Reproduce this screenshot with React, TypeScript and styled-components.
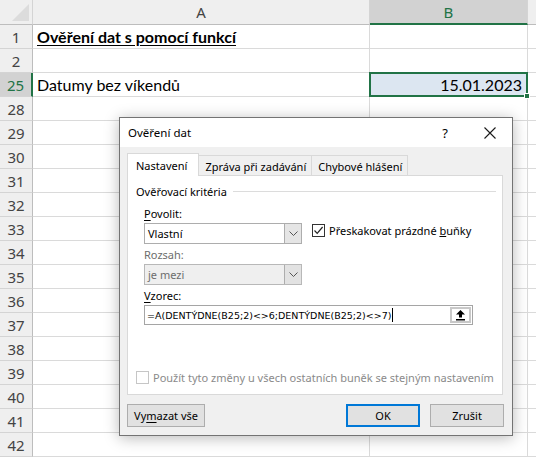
import React from 'react';
import styled, { createGlobalStyle } from 'styled-components';

const GlobalStyle = createGlobalStyle`
  html, body {
    margin: 0;
    padding: 0;
    background: #ffffff;
    overflow: hidden;
  }
  * { box-sizing: border-box; }
`;

const rows = [1, 2, 25, 28, 29, 30, 31, 32, 33, 34, 35, 36, 37, 38, 39, 40, 41, 42];

const App: React.FC = () => {
  return (
    <Page>
      <GlobalStyle />
      <Sheet>
        <Corner>
          <CornerTriangle />
        </Corner>
        <ColHeader>A</ColHeader>
        <ColHeader $active>B</ColHeader>
        <ColHeader />
        {rows.map((n) => (
          <React.Fragment key={n}>
            <RowHeader $active={n === 25}>{n}</RowHeader>
            <Cell>
              {n === 1 && <Heading>Ověření dat s pomocí funkcí</Heading>}
              {n === 25 && 'Datumy bez víkendů'}
            </Cell>
            {n === 25 ? (
              <SelectedCell>
                15.01.2023
                <FillHandle />
              </SelectedCell>
            ) : (
              <Cell />
            )}
            <Cell />
          </React.Fragment>
        ))}
      </Sheet>

      <Dialog>
        <TitleBar>
          <DialogTitle>Ověření dat</DialogTitle>
          <TitleButtons>
            <HelpMark>?</HelpMark>
            <CloseIcon width="12" height="12" viewBox="0 0 12 12">
              <path d="M0.5 0.5 L11.5 11.5 M11.5 0.5 L0.5 11.5" stroke="#1a1a1a" strokeWidth="1.1" />
            </CloseIcon>
          </TitleButtons>
        </TitleBar>

        <DialogBody>
          <Tabs>
            <Tab $selected>Nastavení</Tab>
            <Tab>Zpráva při zadávání</Tab>
            <Tab>Chybové hlášení</Tab>
          </Tabs>

          <Panel>
            <GroupLabel>
              <span>Ověřovací kritéria</span>
              <GroupLine />
            </GroupLabel>

            <Fields>
              <FieldRow>
                <Field>
                  <Label>
                    <u>P</u>ovolit:
                  </Label>
                  <Select>
                    <SelectValue>Vlastní</SelectValue>
                    <DropButton>
                      <Chevron />
                    </DropButton>
                  </Select>
                </Field>
                <CheckRow>
                  <CheckBox>
                    <svg width="11" height="11" viewBox="0 0 11 11">
                      <path d="M1.5 5.5 L4.2 8.3 L9.6 2" fill="none" stroke="#222" strokeWidth="1.2" />
                    </svg>
                  </CheckBox>
                  <span>
                    Přeskakovat prázdné <u>b</u>uňky
                  </span>
                </CheckRow>
              </FieldRow>

              <Field>
                <Label $disabled>Rozsah:</Label>
                <Select $disabled>
                  <SelectValue>je mezi</SelectValue>
                  <DropButton $disabled>
                    <Chevron />
                  </DropButton>
                </Select>
              </Field>

              <Field>
                <Label>
                  <u>V</u>zorec:
                </Label>
                <FormulaBox>
                  <FormulaText>
                    =A(DENTÝDNE(B25;2)&lt;&gt;6;DENTÝDNE(B25;2)&lt;&gt;7)
                    <Caret />
                  </FormulaText>
                  <CollapseButton>
                    <svg width="11" height="12" viewBox="0 0 11 12">
                      <path d="M5.5 1 L10 5.5 L7 5.5 L7 8.5 L4 8.5 L4 5.5 L1 5.5 Z" fill="#000" />
                      <rect x="1" y="10" width="9" height="1.5" fill="#000" />
                    </svg>
                  </CollapseButton>
                </FormulaBox>
              </Field>
            </Fields>

            <ApplyRow>
              <CheckBox $disabled />
              <span>Použít tyto změny u všech ostatních buněk se stejným nastavením</span>
            </ApplyRow>
          </Panel>

          <ButtonBar>
            <Button $width={78}>
              Vy<u>m</u>azat vše
            </Button>
            <ButtonGroup>
              <Button $primary>OK</Button>
              <Button>Zrušit</Button>
            </ButtonGroup>
          </ButtonBar>
        </DialogBody>
      </Dialog>
    </Page>
  );
};

const Chevron: React.FC = () => (
  <svg width="9" height="5" viewBox="0 0 9 5">
    <path d="M0.5 0.5 L4.5 4.5 L8.5 0.5" fill="none" stroke="#555" strokeWidth="1" />
  </svg>
);

const Page = styled.div`
  position: relative;
  width: 536px;
  height: 458px;
  overflow: hidden;
  font-family: 'Noto Sans', 'Open Sans', sans-serif;
`;

const Sheet = styled.div`
  display: grid;
  grid-template-columns: 33px 337px 158px 30px;
  grid-template-rows: 25px;
  grid-auto-rows: 24px;
`;

const Corner = styled.div`
  position: relative;
  background: #efefef;
  border-right: 1px solid #d4d4d4;
  border-bottom: 1px solid #bdbdbd;
`;

const CornerTriangle = styled.div`
  position: absolute;
  right: 3px;
  bottom: 3px;
  width: 0;
  height: 0;
  border-left: 17px solid transparent;
  border-bottom: 17px solid #dcdcdc;
`;

const ColHeader = styled.div<{ $active?: boolean }>`
  display: flex;
  align-items: center;
  justify-content: center;
  font-size: 15px;
  color: ${(p) => (p.$active ? '#217346' : '#444444')};
  background: ${(p) => (p.$active ? '#d2d2d2' : '#efefef')};
  border-right: 1px solid #d4d4d4;
  border-bottom: ${(p) => (p.$active ? '2px solid #217346' : '1px solid #bdbdbd')};
`;

const RowHeader = styled.div<{ $active?: boolean }>`
  display: flex;
  align-items: center;
  justify-content: center;
  font-size: 15px;
  color: ${(p) => (p.$active ? '#217346' : '#444444')};
  background: ${(p) => (p.$active ? '#d2d2d2' : '#efefef')};
  border-right: ${(p) => (p.$active ? '2px solid #217346' : '1px solid #bdbdbd')};
  border-bottom: 1px solid #d4d4d4;
`;

const Cell = styled.div`
  display: flex;
  align-items: center;
  padding: 0 4px;
  font-family: Lato, 'Noto Sans', sans-serif;
  font-size: 16px;
  color: #000;
  white-space: nowrap;
  border-right: 1px solid #dadada;
  border-bottom: 1px solid #dadada;
`;

const Heading = styled.span`
  font-weight: 700;
  text-decoration: underline;
  text-underline-offset: 2px;
`;

const SelectedCell = styled(Cell)`
  position: relative;
  justify-content: flex-end;
  padding-right: 4px;
  background: #dce6f1;
  border: 2px solid #217346;
  margin: -1px 0 0 -1px;
  width: calc(100% + 1px);
  height: calc(100% + 1px);
`;

const FillHandle = styled.div`
  position: absolute;
  right: -4px;
  bottom: -4px;
  width: 6px;
  height: 6px;
  background: #217346;
  border: 1px solid #fff;
`;

const Dialog = styled.div`
  position: absolute;
  left: 119px;
  top: 117px;
  width: 394px;
  height: 319px;
  display: flex;
  flex-direction: column;
  background: #f0f0f0;
  border: 1px solid #737373;
  box-shadow: 0 2px 14px rgba(0, 0, 0, 0.28);
  font-family: 'Noto Sans', 'Open Sans', sans-serif;
  font-size: 11px;
  color: #000;
`;

const TitleBar = styled.div`
  height: 30px;
  display: flex;
  align-items: center;
  justify-content: space-between;
  padding: 0 16px 0 8px;
  background: #ffffff;
`;

const DialogTitle = styled.span`
  font-size: 11.5px;
`;

const TitleButtons = styled.div`
  display: flex;
  align-items: center;
  gap: 36px;
`;

const HelpMark = styled.span`
  font-size: 13px;
`;

const CloseIcon = styled.svg`
  display: block;
`;

const DialogBody = styled.div`
  flex: 1;
  display: flex;
  flex-direction: column;
  padding: 6px 8px 8px 7px;
`;

const Tabs = styled.div`
  display: flex;
  align-items: flex-end;
  height: 23px;
  margin-bottom: -1px;
  position: relative;
  z-index: 1;
`;

const Tab = styled.div<{ $selected?: boolean }>`
  display: flex;
  align-items: center;
  height: ${(p) => (p.$selected ? '23px' : '20px')};
  padding: ${(p) => (p.$selected ? '1px 11px 0 8px' : '1px 5px 0 6px')};
  margin-bottom: ${(p) => (p.$selected ? '0' : '1px')};
  background: ${(p) => (p.$selected ? '#ffffff' : '#f0f0f0')};
  border: 1px solid #d9d9d9;
  border-bottom: 0;
  border-left: ${(p) => (p.$selected ? '1px solid #d9d9d9' : '0')};
  white-space: nowrap;
`;

const Panel = styled.div`
  height: 220px;
  margin-right: 1px;
  display: flex;
  flex-direction: column;
  background: #ffffff;
  border: 1px solid #d9d9d9;
  padding: 7px 6px 0 8px;
`;

const GroupLabel = styled.div`
  display: flex;
  align-items: center;
  gap: 6px;
  height: 16px;
`;

const GroupLine = styled.div`
  flex: 1;
  height: 1px;
  background: #dcdcdc;
`;

const Fields = styled.div`
  display: flex;
  flex-direction: column;
  padding: 4px 0 0 8px;
`;

const FieldRow = styled.div`
  display: flex;
  align-items: flex-end;
  gap: 10px;
`;

const Field = styled.div`
  display: flex;
  flex-direction: column;
`;

const Label = styled.div<{ $disabled?: boolean }>`
  height: 20px;
  display: flex;
  align-items: center;
  color: ${(p) => (p.$disabled ? '#6d6d6d' : '#000')};
  u {
    text-underline-offset: 2px;
  }
`;

const Select = styled.div<{ $disabled?: boolean }>`
  width: 158px;
  height: 21px;
  display: flex;
  align-items: stretch;
  background: ${(p) => (p.$disabled ? '#efefef' : '#ffffff')};
  border: 1px solid ${(p) => (p.$disabled ? '#b8b8b8' : '#adadad')};
  color: ${(p) => (p.$disabled ? '#6d6d6d' : '#000')};
`;

const SelectValue = styled.div`
  flex: 1;
  display: flex;
  align-items: center;
  padding-left: 3px;
`;

const DropButton = styled.div<{ $disabled?: boolean }>`
  width: 17px;
  display: flex;
  align-items: center;
  justify-content: center;
  background: ${(p) => (p.$disabled ? '#e2e2e2' : '#e5e5e5')};
  border-left: 1px solid #adadad;
`;

const CheckRow = styled.div`
  display: flex;
  align-items: center;
  gap: 4px;
  height: 22px;
  padding-bottom: 5px;
`;

const CheckBox = styled.div<{ $disabled?: boolean }>`
  flex-shrink: 0;
  width: 13px;
  height: 13px;
  display: flex;
  align-items: center;
  justify-content: center;
  background: #fff;
  border: 1px solid ${(p) => (p.$disabled ? '#c6c6c6' : '#333333')};
`;

const FormulaBox = styled.div`
  width: 329px;
  height: 20px;
  display: flex;
  align-items: stretch;
  background: #fff;
  border: 1px solid #a5a5a5;
`;

const FormulaText = styled.div`
  flex: 1;
  display: flex;
  align-items: center;
  padding-left: 2px;
  font-family: 'DejaVu Sans', 'Noto Sans', sans-serif;
  font-size: 9.5px;
  white-space: nowrap;
`;

const Caret = styled.span`
  display: inline-block;
  width: 1px;
  height: 14px;
  margin-left: 1px;
  background: #000;
`;

const CollapseButton = styled.div`
  width: 21px;
  margin: 1px;
  display: flex;
  align-items: center;
  justify-content: center;
  background: #fff;
  border: 2px solid #c8c8c8;
`;

const ApplyRow = styled.div`
  display: flex;
  align-items: center;
  gap: 4px;
  margin-top: auto;
  margin-bottom: 9px;
  color: #8a8a8a;
  white-space: nowrap;
`;

const ButtonBar = styled.div`
  display: flex;
  justify-content: space-between;
  align-items: center;
  margin-top: 9px;
`;

const ButtonGroup = styled.div`
  display: flex;
  gap: 10px;
`;

const Button = styled.button<{ $primary?: boolean; $width?: number }>`
  width: ${(p) => p.$width ?? 74}px;
  padding: 0;
  height: 23px;
  font-family: inherit;
  font-size: 11px;
  color: #000;
  background: #e1e1e1;
  border: ${(p) => (p.$primary ? '2px solid #0078d7' : '1px solid #adadad')};
  white-space: nowrap;
  u {
    text-underline-offset: 2px;
  }
`;

export default App;
